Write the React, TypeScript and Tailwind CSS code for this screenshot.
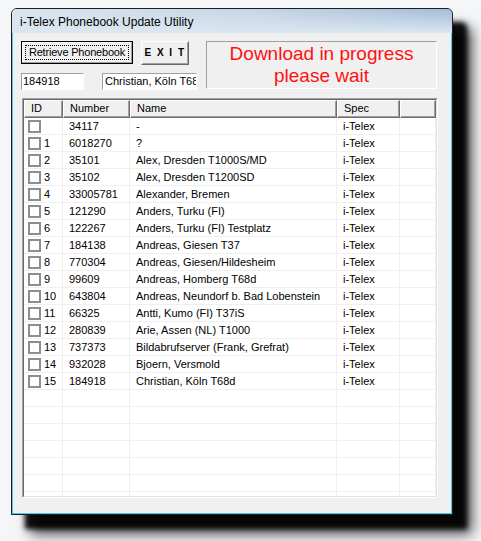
import React from "react";

const rows: [string, string, string][] = [
  ["", "34117", "-"],
  ["1", "6018270", "?"],
  ["2", "35101", "Alex, Dresden T1000S/MD"],
  ["3", "35102", "Alex, Dresden T1200SD"],
  ["4", "33005781", "Alexander, Bremen"],
  ["5", "121290", "Anders, Turku (FI)"],
  ["6", "122267", "Anders, Turku (FI) Testplatz"],
  ["7", "184138", "Andreas, Giesen T37"],
  ["8", "770304", "Andreas, Giesen/Hildesheim"],
  ["9", "99609", "Andreas, Homberg T68d"],
  ["10", "643804", "Andreas, Neundorf b. Bad Lobenstein"],
  ["11", "66325", "Antti, Kumo (FI) T37iS"],
  ["12", "280839", "Arie, Assen (NL) T1000"],
  ["13", "737373", "Bildabrufserver (Frank, Grefrat)"],
  ["14", "932028", "Bjoern, Versmold"],
  ["15", "184918", "Christian, Köln T68d"],
];

const cols = "grid grid-cols-[39px_67px_207px_63px_1fr]";

function HeaderCell({ children }: { children?: React.ReactNode }) {
  return (
    <div className="h-full border-t border-l border-t-white border-l-white border-r border-b border-r-[#6d6d6d] border-b-[#6d6d6d]">
      <div className="h-full border-r border-b border-r-[#a0a0a0] border-b-[#a0a0a0] pl-[6px] flex items-center leading-none">
        {children}
      </div>
    </div>
  );
}

function Cell({ children }: { children?: React.ReactNode }) {
  return (
    <div className="h-full border-r border-[#f0f0f0] pl-[6px] flex items-center whitespace-nowrap overflow-hidden leading-none">
      {children}
    </div>
  );
}

export default function App() {
  return (
    <div className="w-[481px] h-[541px] bg-[#f4f6f8] pt-[8px] pl-[11px] font-['Liberation_Sans',Arial,sans-serif] text-black">
      <div className="w-[442px] h-[507px] border border-[#1e1e1e] rounded-t-[6px] shadow-[14px_14px_5px_rgba(0,0,0,0.92),19px_19px_14px_rgba(0,0,0,0.7)] flex flex-col overflow-hidden bg-[#4fc3ea]">
        {/* title bar */}
        <div className="h-[24px] shrink-0 flex items-center pl-[8px] text-[12px] bg-[linear-gradient(to_right,rgba(220,230,240,0.95)_0%,rgba(220,230,240,0.6)_55%,rgba(220,230,240,0)_100%),linear-gradient(to_bottom,#a3bcd6,#dbe6f1)]">
          <span className="pt-[1px]">i-Telex Phonebook Update Utility</span>
        </div>
        {/* client */}
        <div className="flex-1 mx-[1px] mb-[1px] bg-[#f0f0f0] pl-[8px] pt-[8px] text-[11px]">
          <div className="flex">
            <div className="w-[185px] flex flex-col">
              <div className="flex items-start">
                <div className="w-[112px] h-[23px] border border-black bg-[#f0f0f0]">
                  <div className="h-full border border-t-white border-l-white border-r-[#a0a0a0] border-b-[#a0a0a0] p-[2px]">
                    <div className="h-full border border-dotted border-black flex items-center justify-center leading-none whitespace-nowrap text-[11px] tracking-[-0.2px]">
                      Retrieve Phonebook
                    </div>
                  </div>
                </div>
                <div className="ml-[8px] w-[48px] h-[24px] border border-t-white border-l-white border-r-[#696969] border-b-[#696969]">
                  <div className="h-full border border-t-[#f0f0f0] border-l-[#f0f0f0] border-r-[#a0a0a0] border-b-[#a0a0a0] flex items-center justify-center font-black text-[10px] tracking-[1.5px] leading-none">
                    E X I T
                  </div>
                </div>
              </div>
              <div className="flex mt-[8px]">
                <div className="w-[63px] h-[17px] border border-t-[#a0a0a0] border-l-[#a0a0a0] border-r-white border-b-white bg-white flex items-center pl-[1px] leading-none overflow-hidden whitespace-nowrap text-[11px]">
                  184918
                </div>
                <div className="ml-[18px] w-[95px] h-[17px] border border-t-[#a0a0a0] border-l-[#a0a0a0] border-r-white border-b-white bg-white flex items-center pl-[2px] leading-none overflow-hidden whitespace-nowrap text-[11px]">
                  Christian, Köln T68d
                </div>
              </div>
            </div>
            <div className="w-[231px] h-[48px] border border-t-[#a0a0a0] border-l-[#a0a0a0] border-r-white border-b-white bg-[#f0f0f0] flex flex-col items-center justify-center text-[19px] leading-[22px] text-[#ff1010]">
              <div>Download in progress</div>
              <div>please wait</div>
            </div>
          </div>
          {/* list view */}
          <div className="mt-[8px] ml-[1px] w-[416px] h-[400px] border border-t-[#a0a0a0] border-l-[#a0a0a0] border-r-white border-b-white">
            <div className="h-full border border-t-[#696969] border-l-[#696969] border-r-[#e3e3e3] border-b-[#e3e3e3] bg-white overflow-hidden">
              <div className={`${cols} h-[18px] bg-[#f0f0f0]`}>
                <HeaderCell>ID</HeaderCell>
                <HeaderCell>Number</HeaderCell>
                <HeaderCell>Name</HeaderCell>
                <HeaderCell>Spec</HeaderCell>
                <HeaderCell />
              </div>
              {rows.map((r, i) => (
                <div key={i} className={`${cols} h-[17px] border-b border-[#f0f0f0]`}>
                  <div className="h-full border-r border-[#f0f0f0] pl-[4px] flex items-center leading-none">
                    <span className="w-[13px] h-[13px] border-2 border-[#8e8e8e] bg-white shrink-0" />
                    <span className="ml-[3px]">{r[0]}</span>
                  </div>
                  <Cell>{r[1]}</Cell>
                  <Cell>{r[2]}</Cell>
                  <Cell>i-Telex</Cell>
                  <Cell />
                </div>
              ))}
              {Array.from({ length: 7 }).map((_, i) => (
                <div key={`e${i}`} className={`${cols} h-[17px] border-b border-[#f0f0f0]`}>
                  <Cell />
                  <Cell />
                  <Cell />
                  <Cell />
                  <Cell />
                </div>
              ))}
            </div>
          </div>
        </div>
      </div>
    </div>
  );
}
